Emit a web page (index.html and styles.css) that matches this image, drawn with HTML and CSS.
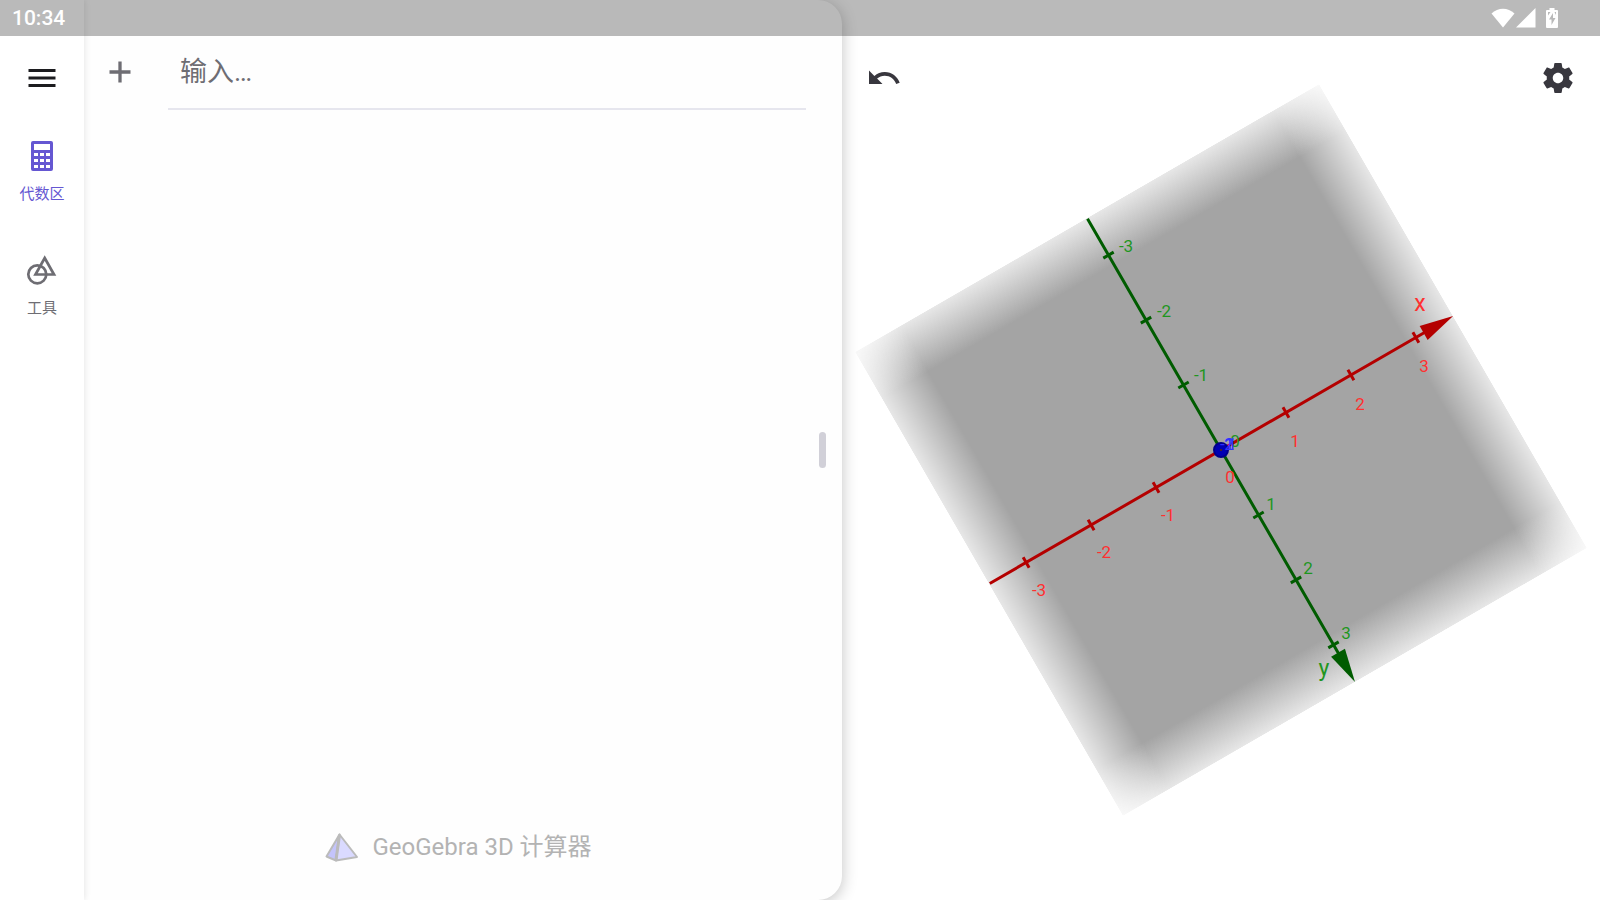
FILE: index.html
```html
<!DOCTYPE html>
<html lang="zh-CN">
<head>
<meta charset="utf-8">
<title>GeoGebra 3D 计算器</title>
<link rel="stylesheet" href="styles.css">
</head>
<body>
<header class="status">
  <time class="clock">10:34</time>
  <div class="indicators">
    <svg class="wifi" viewBox="0 0 24 20"><path d="M12 19.500 .5 5.500C7 -1 17 -1 23.500 5.500Z"/></svg>
    <svg class="signal" viewBox="0 0 20 20"><path d="M0 19.500 19.500 0V19.500Z"/></svg>
    <svg class="battery" viewBox="0 0 12 20"><path fill-rule="evenodd" d="M3.500 0h5v2H11q1 0 1 1v16q0 1-1 1H1q-1 0-1-1V3q0-1 1-1h2.500ZM7 5 3 11.500h2.500v5.500L9.500 10H7ZM2 4v3.500L4.500 4ZM10 4H8.500L10 7Z"/></svg>
  </div>
</header>
<div class="app">
  <nav class="rail">
    <button class="menu" aria-label="菜单"><svg class="icon" viewBox="0 0 24 24"><path d="M3 18h18v-2H3v2zm0-5h18v-2H3v2zm0-7v2h18V6H3z"/></svg></button>
    <button class="tab active">
      <svg class="icon" viewBox="0 0 36 36"><path fill-rule="evenodd" d="M9 3h18q2 0 2 2v26q0 2-2 2H9q-2 0-2-2V5q0-2 2-2ZM10 6v6h16V6ZM10 15v3h4v-3ZM16 15v3h4v-3ZM22 15v3h4v-3ZM10 21v3h4v-3ZM16 21v3h4v-3ZM22 21v3h4v-3ZM10 27v3h4v-3ZM16 27v3h4v-3ZM22 27v3h4v-3Z"/></svg>
      <span>代数区</span>
    </button>
    <button class="tab">
      <svg class="icon outline" viewBox="0 0 36 36"><circle cx="13.300" cy="22.300" r="9"/><path d="M20.700 6 30 22.500H11.500Z"/></svg>
      <span>工具</span>
    </button>
  </nav>
  <main class="panel">
    <div class="entry">
      <button class="add" aria-label="添加"><svg class="icon" viewBox="0 0 24 24"><path d="M19 13.100h-5.900V19h-2.200v-5.900H5v-2.200h5.900V5h2.200v5.900H19z"/></svg></button>
      <input class="field" type="text" placeholder="输入…" aria-label="输入">
    </div>
    <div class="brand">
      <svg class="logo" viewBox="0 0 34 30">
        <path class="side" d="M14.500 2.500 1.500 24.500 11 28.500Z"/>
        <path class="front" d="M14.500 2.500 11 28.500 32 25Z"/>
        <path class="edge" d="M14.500 3 11 28"/>
      </svg>
      <span>GeoGebra 3D 计算器</span>
    </div>
    <div class="handle"></div>
  </main>
  <section class="view">
    <svg class="scene" viewBox="-379 -450 758 900">
      <defs>
        <linearGradient id="fadeX">
          <stop offset="0" stop-color="#fff" stop-opacity=".26"/>
          <stop offset=".1" stop-color="#fff" stop-opacity="1"/>
          <stop offset=".9" stop-color="#fff" stop-opacity="1"/>
          <stop offset="1" stop-color="#fff" stop-opacity=".26"/>
        </linearGradient>
        <linearGradient id="fadeY" x2="0" y2="1">
          <stop offset="0" stop-color="#a4a4a4" stop-opacity=".26"/>
          <stop offset=".1" stop-color="#a4a4a4" stop-opacity="1"/>
          <stop offset=".9" stop-color="#a4a4a4" stop-opacity="1"/>
          <stop offset="1" stop-color="#a4a4a4" stop-opacity=".26"/>
        </linearGradient>
        <mask id="plane" maskUnits="userSpaceOnUse" x="-268" y="-268" width="536" height="536"><rect x="-268" y="-268" width="536" height="536" fill="url(#fadeX)"/></mask>
        <g id="axis">
          <path class="line" d="M-267 0H240M-225-6V6M-150-6V6M-75-6V6M75-6V6M150-6V6M225-6V6"/>
          <path class="head" d="M268 0 234-8V8Z"/>
        </g>
      </defs>
      <g transform="rotate(-30)">
        <rect x="-268" y="-268" width="536" height="536" fill="url(#fadeY)" mask="url(#plane)"/>
      </g>
      <use class="y-axis" href="#axis" transform="rotate(60)"/>
      <use class="x-axis" href="#axis" transform="rotate(-30)"/>
      <circle class="origin" r="7"/>
      <circle class="origin-core" r="1"/>
      <g class="labels y-labels">
        <text x="-95" y="-198">-3</text><text x="-57" y="-133">-2</text><text x="-20" y="-69">-1</text>
        <text x="14" y="-3">0</text><text x="50" y="60">1</text><text x="87" y="124">2</text><text x="125" y="189">3</text>
        <text class="name" x="103" y="226">y</text>
      </g>
      <g class="labels x-labels">
        <text x="-182" y="146">-3</text><text x="-117" y="108">-2</text><text x="-53" y="71">-1</text>
        <text x="9" y="33">0</text><text x="74" y="-3">1</text><text x="139" y="-40">2</text><text x="203" y="-78">3</text>
        <text class="name" x="199" y="-139">x</text>
      </g>
      <g class="labels z-labels"><text x="6" y="0">-1</text><text x="8" y="0">2</text><text x="11" y="0">1</text></g>
    </svg>
    <div class="toolbar">
      <button aria-label="撤销"><svg class="icon" viewBox="0 0 24 24"><path d="M12.500 8c-2.650 0-5.050.99-6.900 2.600L2 7v9h9l-3.620-3.620c1.390-1.160 3.160-1.880 5.120-1.880 3.540 0 6.550 2.310 7.600 5.500l2.370-.78C21.080 11.030 17.150 8 12.500 8z"/></svg></button>
      <button aria-label="设置"><svg class="icon" viewBox="0 0 24 24"><path d="M19.430 12.980c.04-.32.07-.64.07-.98s-.03-.66-.07-.98l2.110-1.650c.19-.15.24-.42.12-.64l-2-3.460c-.12-.22-.39-.3-.61-.22l-2.490 1c-.52-.4-1.080-.73-1.690-.98l-.38-2.650C14.460 2.180 14.250 2 14 2h-4c-.25 0-.46.18-.49.42l-.38 2.650c-.61.25-1.170.59-1.690.98l-2.490-1c-.23-.09-.49 0-.61.22l-2 3.460c-.13.22-.07.49.12.64l2.110 1.650c-.04.32-.07.65-.07.98s.03.66.07.98l-2.110 1.650c-.19.15-.24.42-.12.64l2 3.460c.12.22.39.3.61.22l2.490-1c.52.4 1.080.73 1.690.98l.38 2.650c.03.24.24.42.49.42h4c.25 0 .46-.18.49-.42l.38-2.650c.61-.25 1.170-.59 1.690-.98l2.490 1c.23.09.49 0 .61-.22l2-3.460c.12-.22.07-.49-.12-.64l-2.110-1.650zM12 15.500c-1.930 0-3.500-1.570-3.500-3.500s1.570-3.500 3.500-3.500 3.500 1.570 3.500 3.500-1.570 3.500-3.500 3.500z"/></svg></button>
    </div>
  </section>
</div>
</body>
</html>
```
FILE: styles.css
```css
* { box-sizing: border-box; }
body {
  margin: 0;
  font-family: Roboto, "Noto Sans CJK SC", sans-serif;
  color: #6e6d73;
  background: #fff;
}
button {
  padding: 0;
  border: 0;
  background: none;
  font: inherit;
  color: inherit;
}
svg { display: block; fill: currentColor; }
.icon { width: 36px; height: 36px; }
.outline { fill: none; stroke: currentColor; stroke-width: 2.7; }

.status {
  position: absolute;
  inset: 0 0 auto 0;
  z-index: 5;
  height: 36px;
  padding: 0 42px 0 12px;
  display: flex;
  align-items: center;
  justify-content: space-between;
  background: rgba(0, 0, 0, .27);
  color: #fff;
}
.clock { font-size: 21px; font-weight: 500; line-height: 38px; }
.indicators { display: flex; align-items: center; }
.wifi { width: 24px; height: 20px; }
.signal { width: 20px; height: 20px; margin: 0 10px 0 1px; }
.battery { width: 12px; height: 20px; }

.app {
  display: grid;
  grid-template-columns: 84px minmax(0, 1fr) minmax(0, 1fr);
  min-height: 100vh;
  overflow: hidden;
}
.rail {
  z-index: 2;
  padding-top: 60px;
  display: flex;
  flex-direction: column;
  align-items: center;
  background: #fff;
  box-shadow: 0 0 7px rgba(0, 0, 0, .12);
}
.menu { margin-bottom: 42px; color: #1c1c1f; }
.tab {
  display: flex;
  flex-direction: column;
  align-items: center;
  gap: 10px;
  margin-bottom: 48px;
  font-size: 15px;
  line-height: 20px;
}
.active { color: #6557d2; }

.panel {
  position: relative;
  z-index: 1;
  padding: 36px 36px 35px 18px;
  display: flex;
  flex-direction: column;
  justify-content: space-between;
  background: #fefefe;
  border-radius: 0 24px 24px 0;
  box-shadow: 0 3px 16px rgba(0, 0, 0, .24);
}
.entry { display: flex; gap: 30px; }
.add { height: 72px; }
.field {
  flex: 1;
  min-width: 0;
  height: 74px;
  padding: 0 12px;
  border: 0;
  border-bottom: 2px solid #e6e6ee;
  background: none;
  font: 27px/36px Roboto, "Noto Sans CJK SC", sans-serif;
  color: #6e6d73;
  outline: 0;
}
.field::placeholder { color: #6e6d73; opacity: 1; }
.brand {
  display: flex;
  align-items: center;
  justify-content: center;
  gap: 13px;
  padding-left: 9px;
  font-size: 24px;
  line-height: 36px;
  color: #b3b3b3;
}
.logo { width: 34px; height: 30px; }
.logo path { stroke: #bbb; stroke-width: 2; stroke-linejoin: round; }
.side { fill: #c4c4fb; }
.front { fill: #dadaff; }
.logo .edge { stroke-width: 3; }
.handle {
  position: absolute;
  right: 16px;
  top: calc(50% - 18px);
  width: 7px;
  height: 36px;
  border-radius: 4px;
  background: #d1d0d8;
}

.view { position: relative; }
.scene { width: 100%; height: 100vh; }
.toolbar {
  position: absolute;
  inset: 60px 24px auto 24px;
  display: flex;
  justify-content: space-between;
  color: #38373e;
}
.line { fill: none; stroke: currentColor; stroke-width: 3; }
.head { fill: currentColor; }
.x-axis { color: #b40000; }
.y-axis { color: #005c00; }
.origin { fill: #0000b4; stroke: #00008c; stroke-width: 2; }
.origin-core { fill: #5a2a10; }
.labels { font-size: 17px; text-anchor: middle; }
.labels .name { font-size: 23px; }
.x-labels { fill: #ff3030; }
.y-labels { fill: #1f961f; }
.z-labels { fill: #3030ff; }
```
